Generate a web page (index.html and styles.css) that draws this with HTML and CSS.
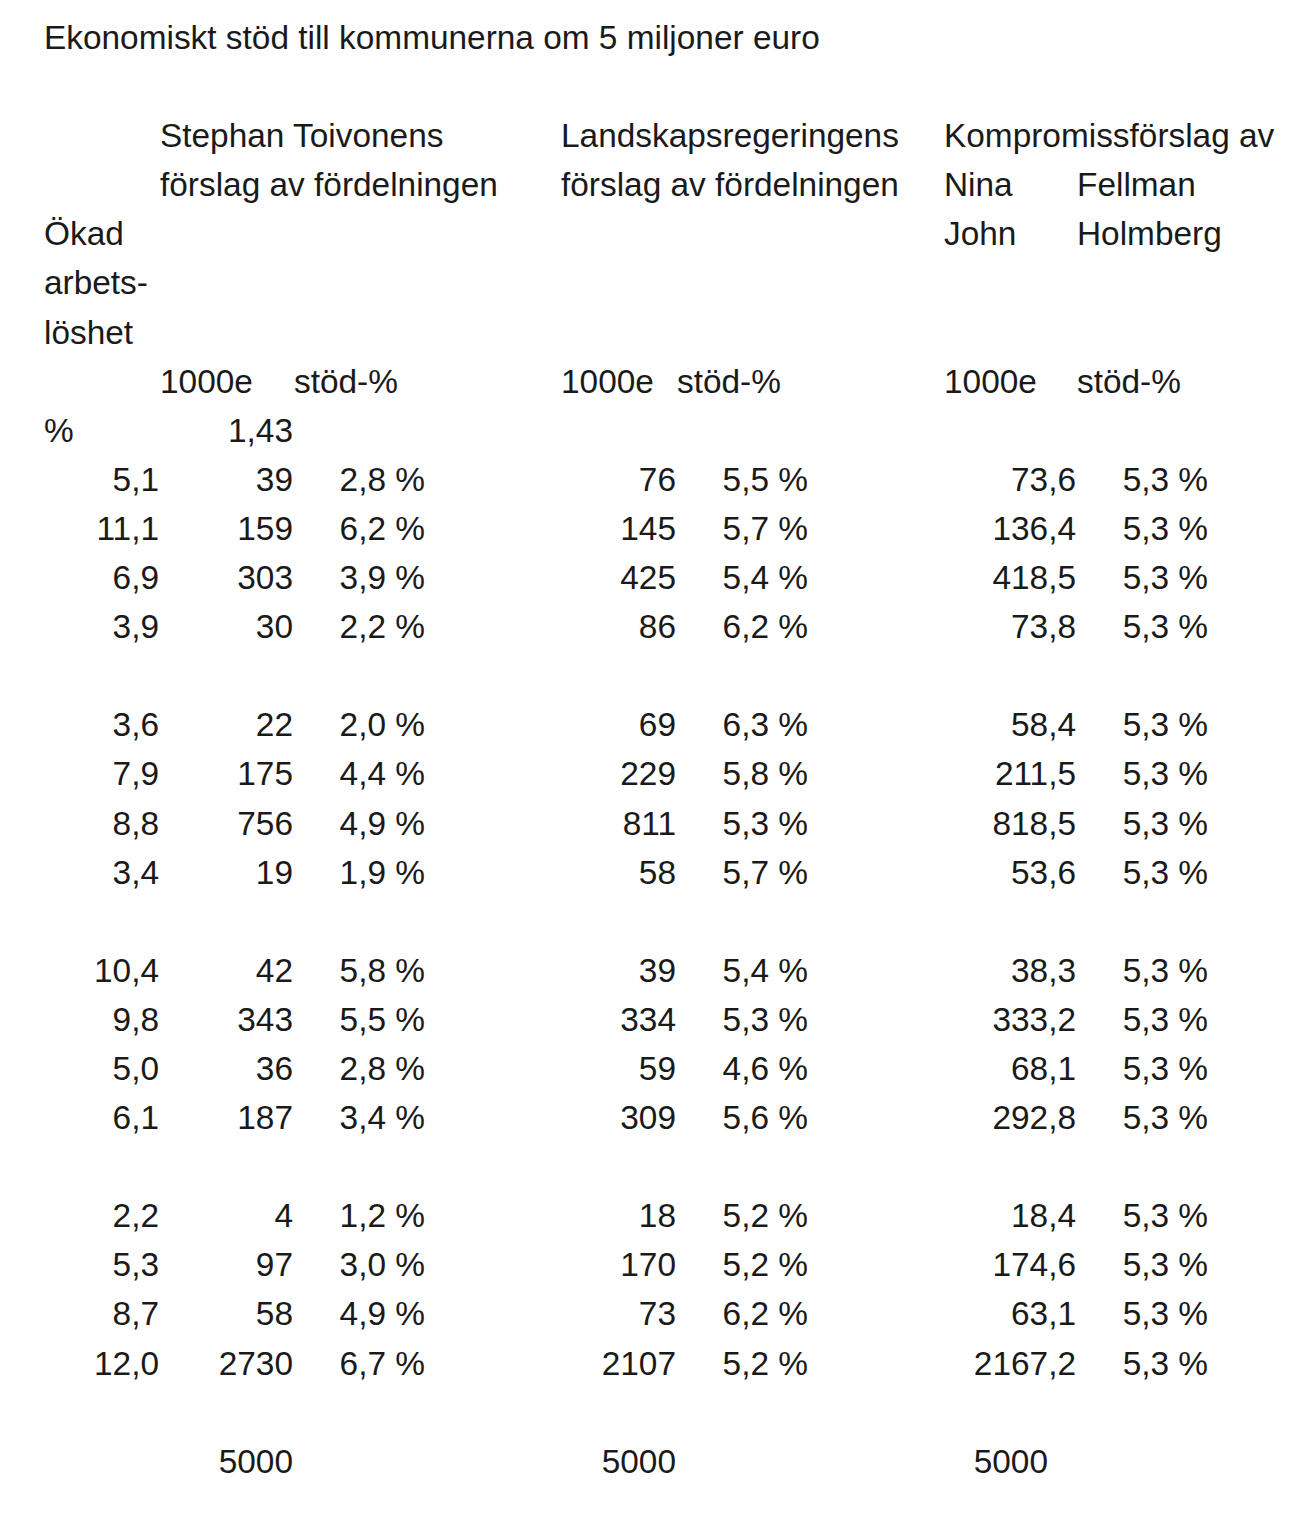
FILE: index.html
```html
<!DOCTYPE html>
<html lang="sv">
<head>
<meta charset="utf-8">
<title>Ekonomiskt stöd till kommunerna</title>
<link rel="stylesheet" href="styles.css">
</head>
<body>
<table class="sheet">
<colgroup>
<col class="c-a"><col class="c-b"><col class="c-c"><col class="c-gap"><col class="c-e"><col class="c-f"><col class="c-gap2"><col class="c-h"><col class="c-i">
</colgroup>
<tbody>
<tr><td colspan="9" class="t">Ekonomiskt stöd till kommunerna om 5 miljoner euro</td></tr>
<tr><td></td><td></td><td></td><td></td><td></td><td></td><td></td><td></td><td></td></tr>
<tr><td></td><td class="t">Stephan Toivonens</td><td></td><td></td><td class="t">Landskapsregeringens</td><td></td><td></td><td class="t">Kompromissförslag av</td><td></td></tr>
<tr><td></td><td class="t">förslag av fördelningen</td><td></td><td></td><td class="t">förslag av fördelningen</td><td></td><td></td><td class="t">Nina</td><td class="t">Fellman</td></tr>
<tr><td class="t">Ökad</td><td></td><td></td><td></td><td></td><td></td><td></td><td class="t">John</td><td class="t">Holmberg</td></tr>
<tr><td class="t">arbets-</td><td></td><td></td><td></td><td></td><td></td><td></td><td></td><td></td></tr>
<tr><td class="t">löshet</td><td></td><td></td><td></td><td></td><td></td><td></td><td></td><td></td></tr>
<tr><td></td><td class="t">1000e</td><td class="t">stöd-%</td><td></td><td class="t">1000e</td><td class="t">stöd-%</td><td></td><td class="t">1000e</td><td class="t">stöd-%</td></tr>
<tr><td class="t">%</td><td class="n">1,43</td><td></td><td></td><td></td><td></td><td></td><td></td><td></td></tr>
<tr><td class="n">5,1</td><td class="n">39</td><td class="n">2,8 %</td><td></td><td class="n">76</td><td class="n">5,5 %</td><td></td><td class="n">73,6</td><td class="n">5,3 %</td></tr>
<tr><td class="n">11,1</td><td class="n">159</td><td class="n">6,2 %</td><td></td><td class="n">145</td><td class="n">5,7 %</td><td></td><td class="n">136,4</td><td class="n">5,3 %</td></tr>
<tr><td class="n">6,9</td><td class="n">303</td><td class="n">3,9 %</td><td></td><td class="n">425</td><td class="n">5,4 %</td><td></td><td class="n">418,5</td><td class="n">5,3 %</td></tr>
<tr><td class="n">3,9</td><td class="n">30</td><td class="n">2,2 %</td><td></td><td class="n">86</td><td class="n">6,2 %</td><td></td><td class="n">73,8</td><td class="n">5,3 %</td></tr>
<tr><td></td><td></td><td></td><td></td><td></td><td></td><td></td><td></td><td></td></tr>
<tr><td class="n">3,6</td><td class="n">22</td><td class="n">2,0 %</td><td></td><td class="n">69</td><td class="n">6,3 %</td><td></td><td class="n">58,4</td><td class="n">5,3 %</td></tr>
<tr><td class="n">7,9</td><td class="n">175</td><td class="n">4,4 %</td><td></td><td class="n">229</td><td class="n">5,8 %</td><td></td><td class="n">211,5</td><td class="n">5,3 %</td></tr>
<tr><td class="n">8,8</td><td class="n">756</td><td class="n">4,9 %</td><td></td><td class="n">811</td><td class="n">5,3 %</td><td></td><td class="n">818,5</td><td class="n">5,3 %</td></tr>
<tr><td class="n">3,4</td><td class="n">19</td><td class="n">1,9 %</td><td></td><td class="n">58</td><td class="n">5,7 %</td><td></td><td class="n">53,6</td><td class="n">5,3 %</td></tr>
<tr><td></td><td></td><td></td><td></td><td></td><td></td><td></td><td></td><td></td></tr>
<tr><td class="n">10,4</td><td class="n">42</td><td class="n">5,8 %</td><td></td><td class="n">39</td><td class="n">5,4 %</td><td></td><td class="n">38,3</td><td class="n">5,3 %</td></tr>
<tr><td class="n">9,8</td><td class="n">343</td><td class="n">5,5 %</td><td></td><td class="n">334</td><td class="n">5,3 %</td><td></td><td class="n">333,2</td><td class="n">5,3 %</td></tr>
<tr><td class="n">5,0</td><td class="n">36</td><td class="n">2,8 %</td><td></td><td class="n">59</td><td class="n">4,6 %</td><td></td><td class="n">68,1</td><td class="n">5,3 %</td></tr>
<tr><td class="n">6,1</td><td class="n">187</td><td class="n">3,4 %</td><td></td><td class="n">309</td><td class="n">5,6 %</td><td></td><td class="n">292,8</td><td class="n">5,3 %</td></tr>
<tr><td></td><td></td><td></td><td></td><td></td><td></td><td></td><td></td><td></td></tr>
<tr><td class="n">2,2</td><td class="n">4</td><td class="n">1,2 %</td><td></td><td class="n">18</td><td class="n">5,2 %</td><td></td><td class="n">18,4</td><td class="n">5,3 %</td></tr>
<tr><td class="n">5,3</td><td class="n">97</td><td class="n">3,0 %</td><td></td><td class="n">170</td><td class="n">5,2 %</td><td></td><td class="n">174,6</td><td class="n">5,3 %</td></tr>
<tr><td class="n">8,7</td><td class="n">58</td><td class="n">4,9 %</td><td></td><td class="n">73</td><td class="n">6,2 %</td><td></td><td class="n">63,1</td><td class="n">5,3 %</td></tr>
<tr><td class="n">12,0</td><td class="n">2730</td><td class="n">6,7 %</td><td></td><td class="n">2107</td><td class="n">5,2 %</td><td></td><td class="n">2167,2</td><td class="n">5,3 %</td></tr>
<tr><td></td><td></td><td></td><td></td><td></td><td></td><td></td><td></td><td></td></tr>
<tr><td></td><td class="n">5000</td><td></td><td></td><td class="n">5000</td><td></td><td></td><td class="n sum">5000</td><td></td></tr>
</tbody>
</table>
</body>
</html>
```

FILE: styles.css
```css
html, body {
  margin: 0;
  padding: 0;
  background: #ffffff;
}

body {
  padding: 13px 0 0 44px;
  font-family: "Liberation Sans", Arial, sans-serif;
  font-size: 33.4px;
  color: #1a1a1a;
}

.sheet {
  border-collapse: collapse;
  border-spacing: 0;
  table-layout: fixed;
  width: 1165px;
}

.sheet td {
  padding: 0;
  height: 49.1px;
  line-height: 49.1px;
  white-space: nowrap;
  overflow: visible;
  vertical-align: top;
}

.c-a { width: 116px; }
.c-b { width: 134px; }
.c-c { width: 132px; }
.c-gap { width: 135px; }
.c-e { width: 116px; }
.c-f { width: 132px; }
.c-gap2 { width: 135px; }
.c-h { width: 133px; }
.c-i { width: 132px; }

.sheet td.t { text-align: left; }
.sheet td.n { text-align: right; padding-right: 1px; }
.sheet td.sum { padding-right: 29px; }
```
